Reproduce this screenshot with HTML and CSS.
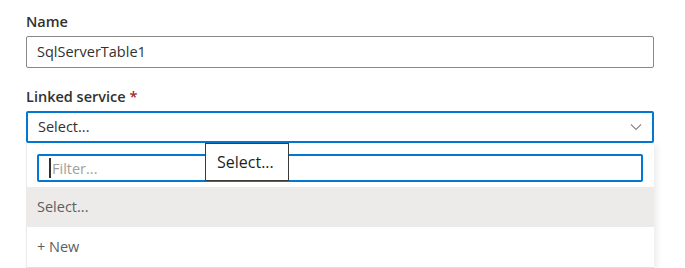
FILE: index.html
```html
<!DOCTYPE html>
<html>
<head>
<meta charset="utf-8">
<link rel="stylesheet" href="styles.css">
</head>
<body>
<div class="form">
  <div class="field">
    <label class="label">Name</label>
    <div class="textbox">SqlServerTable1</div>
  </div>
  <div class="field field-linked">
    <label class="label">Linked service <span class="req">*</span></label>
    <div class="dropdown">
      <span class="dd-title">Select...</span>
      <svg class="chevron" width="12" height="8" viewBox="0 0 12 8"><path d="M1 1.5 L6 6.5 L11 1.5" fill="none" stroke="#8a8886" stroke-width="1.1"/></svg>
    </div>
    <div class="panel">
      <div class="filter-wrap">
        <div class="filter"><span class="caret"></span><span class="filter-ph">Filter...</span></div>
      </div>
      <div class="option option-selected">Select...</div>
      <div class="option">+ New</div>
      <div class="tooltip">Select...</div>
    </div>
  </div>
</div>
</body>
</html>
```
FILE: styles.css
```css
html, body {
  margin: 0;
  padding: 0;
  background: #ffffff;
}
body {
  font-family: "Segoe UI", "Open Sans", sans-serif;
  font-size: 14.5px;
  color: #323130;
  overflow: hidden;
  height: 268px;
}
.form {
  padding: 7px 31px 0 26px;
}
.field-linked {
  margin-top: 14px;
  position: relative;
}
.label {
  display: block;
  font-weight: 600;
  font-size: 14.5px;
  line-height: 20px;
  padding: 5px 0 4px;
  color: #323130;
}
.req {
  color: #a4262c;
}
.textbox {
  box-sizing: border-box;
  height: 32px;
  border: 1px solid #8a8886;
  border-radius: 2px;
  padding: 0 10px;
  line-height: 30px;
  font-size: 14.5px;
  color: #323130;
}
.dropdown {
  box-sizing: border-box;
  height: 32px;
  border: 2px solid #0078d4;
  border-radius: 2px;
  padding: 0 10px 0 10px;
  display: flex;
  align-items: center;
  justify-content: space-between;
  color: #323130;
}
.dd-title {
  font-size: 14.5px;
  line-height: 28px;
}
.chevron {
  display: block;
}
.panel {
  position: relative;
  box-sizing: border-box;
  height: 125px;
  border-left: 1px solid #edebe9;
  border-bottom: 1px solid #e1dfdd;
  box-shadow: 3px 2px 6px rgba(0, 0, 0, 0.08);
  padding: 11px 0 0 0;
  background: #ffffff;
}
.filter-wrap {
  padding: 0 11px 5px 10px;
}
.filter {
  box-sizing: border-box;
  height: 28px;
  border: 2px solid #0078d4;
  border-radius: 2px;
  display: flex;
  align-items: center;
  padding-left: 10px;
}
.caret {
  display: block;
  width: 2px;
  height: 20px;
  background: #323130;
  margin-right: 1px;
}
.filter-ph {
  color: #a19f9d;
  font-size: 14.5px;
}
.option {
  height: 40px;
  line-height: 40px;
  padding-left: 10px;
  color: #605e5c;
  font-size: 14.5px;
}
.option-selected {
  background: #edebe9;
}
.tooltip {
  position: absolute;
  left: 178px;
  top: 0;
  box-sizing: border-box;
  width: 84px;
  height: 38px;
  border: 1px solid #3b3a39;
  background: #ffffff;
  color: #201f1e;
  font-size: 16px;
  line-height: 36px;
  padding-left: 11px;
}
```
